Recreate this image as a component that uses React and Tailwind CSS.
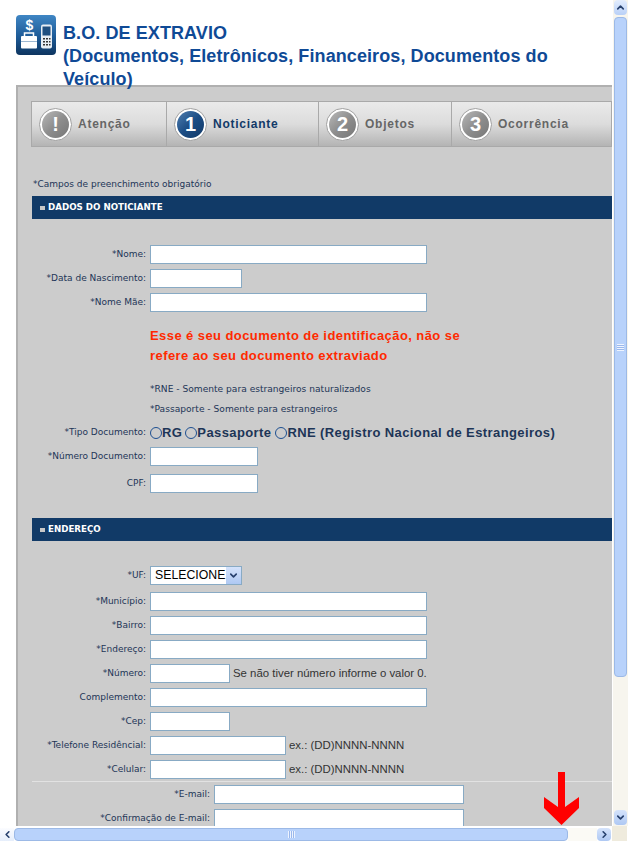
import React from "react";
import { ChevronLeft, ChevronRight, ChevronUp, ChevronDown } from "lucide-react";

const verdana = "font-['DejaVu_Sans',sans-serif]";
const arial = "font-['Liberation_Sans',Arial,sans-serif]";

const Logo = () => (
  <svg width="40" height="40" viewBox="0 0 40 40" className="shrink-0">
    <defs>
      <linearGradient id="logoBg" x1="0" y1="0" x2="0" y2="1">
        <stop offset="0" stopColor="#3f86c4" />
        <stop offset="0.55" stopColor="#1d5a96" />
        <stop offset="1" stopColor="#0e3560" />
      </linearGradient>
    </defs>
    <rect width="40" height="40" rx="4" fill="url(#logoBg)" />
    <text x="13.5" y="15" textAnchor="middle" fontSize="14" fontWeight="700" fontFamily="Liberation Sans" fill="#fff">$</text>
    <path d="M8.5 22v-4h9v4" fill="none" stroke="#fff" strokeWidth="1.5" />
    <rect x="5" y="21" width="16" height="12.5" rx="1" fill="#fff" />
    <rect x="5" y="26" width="16" height="1" fill="#9db8d2" />
    <rect x="25" y="9.5" width="11" height="24" rx="2" fill="#e8eef4" />
    <rect x="26.5" y="11.5" width="8" height="9" fill="#1f4f80" />
    <path d="M27 23h2v1.5h-2zM30 23h2v1.5h-2zM33 23h1.5v1.5H33zM27 26h2v1.5h-2zM30 26h2v1.5h-2zM33 26h1.5v1.5H33zM27 29h2v1.5h-2zM30 29h2v1.5h-2zM33 29h1.5v1.5H33z" fill="#333" />
  </svg>
);

const Tab = ({ width, glyph, label, active }) => (
  <div className={`${width} h-[46px] shrink-0 flex items-center pl-[7px] border-y border-r border-[#a9a9a9] bg-gradient-to-b from-[#eaeaea] via-[#dcdcdc] to-[#b4b4b4]`}>
    <div className="w-[33px] h-[33px] shrink-0 rounded-full bg-white border border-[#a0a0a0] flex items-center justify-center">
      <div
        className={`w-[27px] h-[27px] rounded-full flex items-center justify-center text-[20px] font-bold text-white ${arial} ${
          active
            ? "bg-gradient-to-br from-[#4f7fb0] via-[#1c4d85] to-[#123a68]"
            : "bg-gradient-to-br from-[#b9b9b9] via-[#8e8e8e] to-[#777777]"
        }`}
      >
        {glyph}
      </div>
    </div>
    <span className={`ml-[6px] text-[12px] font-bold tracking-[0.75px] ${arial} ${active ? "text-[#123a68]" : "text-[#666666]"}`}>
      {label}
    </span>
  </div>
);

const SectionBar = ({ title, className }) => (
  <div className={`h-[23px] bg-[#113a67] flex items-center pl-[8px] ${className}`}>
    <span className="w-[5px] h-[4px] bg-[#c8c8c8] mr-[3px]" />
    <span className={`text-[8.7px] font-bold text-white ${verdana}`}>{title}</span>
  </div>
);

const Row = ({ label, input, note, className = "", labelWidth = "w-[115px]" }) => (
  <div className={`flex items-center h-[19px] ${className}`}>
    <div className={`${labelWidth} shrink-0 text-right text-[9px] text-[#1d3557] ${verdana}`}>{label}</div>
    <input className={`${input} h-[19px] ml-[4px] bg-white border border-[#88aac4] shrink-0`} />
    {note}
  </div>
);

const Note = ({ children }) => (
  <span className={`ml-[3px] text-[11.4px] text-[#333333] whitespace-nowrap ${arial}`}>{children}</span>
);

const Radio = () => (
  <span className="w-[12px] h-[12px] rounded-full bg-[#cccccc] border border-[#1d4f91] shrink-0" />
);

const VScroll = () => (
  <div className="w-[15px] h-[826px] ml-px flex flex-col bg-[#f7f5ee]">
    <div className="h-[15px] mx-px bg-gradient-to-b from-[#e3edfd] to-[#b9d0f7] rounded-sm flex items-center justify-center text-[#27406d]">
      <ChevronUp size={11} strokeWidth={3.5} />
    </div>
    <div className="h-[660px] mt-[2px] mx-px bg-[#b8d2fb] border border-[#9cb9e6] rounded-sm flex items-center justify-center">
      <div className="w-[7px] h-[7px] bg-[repeating-linear-gradient(to_bottom,#eef4ff_0,#eef4ff_1px,#9ab8ec_1px,#9ab8ec_2px)]" />
    </div>
    <div className="flex-1" />
    <div className="h-[15px] mx-px mb-px bg-gradient-to-b from-[#d5e3fb] to-[#aec8f3] rounded-sm flex items-center justify-center text-[#27406d]">
      <ChevronDown size={11} strokeWidth={3.5} />
    </div>
  </div>
);

const HScroll = () => (
  <div className="h-[15px] flex items-end">
    <div className="w-[14px] h-[13px] bg-gradient-to-b from-[#fbfcff] to-[#e6eefb] flex items-center justify-center text-[#27406d]">
      <ChevronLeft size={11} strokeWidth={3.5} />
    </div>
    <div className="w-[554px] h-[13px] bg-[#b8d2fb] border border-[#9cb9e6] rounded-sm flex items-center justify-center">
      <div className="w-[7px] h-[7px] bg-[repeating-linear-gradient(to_right,#eef4ff_0,#eef4ff_1px,#9ab8ec_1px,#9ab8ec_2px)]" />
    </div>
    <div className="w-[29px] h-[13px] bg-[#fbfaf5]" />
    <div className="w-[14px] h-[13px] bg-gradient-to-b from-[#d5e3fb] to-[#aec8f3] rounded-sm flex items-center justify-center text-[#27406d]">
      <ChevronRight size={11} strokeWidth={3.5} />
    </div>
    <div className="w-px" />
    <div className="w-[15px] h-[15px] bg-[#efebdd]" />
  </div>
);

export default function App() {
  return (
    <div className="relative w-[634px] h-[850px] overflow-hidden bg-white">
      <div className="flex h-[826px]">
        <div className="w-[612px] h-[826px] overflow-hidden">
          {/* cabecalho */}
          <header className="flex pl-[16px] pt-[15px] h-[85px]">
            <Logo />
            <h1 className={`ml-[7px] mt-[7px] w-[500px] text-[18px] leading-[23px] tracking-[0.09px] font-bold text-[#0f4a96] ${arial}`}>
              B.O. DE EXTRAVIO
              <br />
              (Documentos, Eletrônicos, Financeiros, Documentos do Veículo)
            </h1>
          </header>

          <main className="ml-[16px] h-[741px] bg-[#cccccc] border-l-[2px] border-t-[2px] border-[#b0b0b0] pl-[13px]">
            <div className="flex mt-[14px] border-l border-[#a9a9a9]">
              <Tab width="w-[135px]" glyph="!" label="Atenção" />
              <Tab width="w-[152px]" glyph="1" label="Noticiante" active />
              <Tab width="w-[133px]" glyph="2" label="Objetos" />
              <Tab width="w-[160px]" glyph="3" label="Ocorrência" />
            </div>

            <p className={`ml-[2px] mt-[31px] text-[9px] leading-[12px] text-[#1d3557] ${verdana}`}>*Campos de preenchimento obrigatório</p>
            <SectionBar title="DADOS DO NOTICIANTE" className="mt-[6px] ml-px" />

            <Row label="*Nome:" input="w-[277px]" className="mt-[26px]" />
            <Row label="*Data de Nascimento:" input="w-[92px]" className="mt-[5px]" />
            <Row label="*Nome Mãe:" input="w-[277px]" className="mt-[5px]" />

            <div className={`ml-[119px] mt-[14px] w-[340px] text-[13px] leading-[20px] font-bold text-[#ff2a00] tracking-[0.42px] ${arial}`}>
              Esse é seu documento de identificação, não se
              <br />
              refere ao seu documento extraviado
            </div>

            <p className={`ml-[119px] mt-[17px] text-[9.1px] leading-[12px] text-[#1d3557] ${verdana}`}>*RNE - Somente para estrangeiros naturalizados</p>
            <p className={`ml-[119px] mt-[8px] text-[9.1px] leading-[12px] text-[#1d3557] ${verdana}`}>*Passaporte - Somente para estrangeiros</p>

            <div className="flex items-center h-[16px] mt-[10px]">
              <div className={`w-[115px] shrink-0 text-right text-[9px] text-[#1d3557] ${verdana}`}>*Tipo Documento:</div>
              <div className={`ml-[4px] flex items-center whitespace-nowrap text-[13px] font-bold text-[#1d3557] tracking-[0.4px] ${arial}`}>
                <Radio />
                <span>RG</span>
                <span className="w-[3px]" />
                <Radio />
                <span>Passaporte</span>
                <span className="w-[4px]" />
                <Radio />
                <span>RNE (Registro Nacional de Estrangeiros)</span>
              </div>
            </div>

            <Row label="*Número Documento:" input="w-[108px]" className="mt-[6px]" />
            <Row label="CPF:" input="w-[108px]" className="mt-[8px]" />

            <SectionBar title="ENDEREÇO" className="mt-[25px] ml-px" />

            <div className="flex items-center h-[19px] mt-[25px]">
              <div className={`w-[115px] shrink-0 text-right text-[9px] text-[#1d3557] ${verdana}`}>*UF:</div>
              <div className="ml-[4px] w-[92px] h-[19px] bg-white border border-[#88aac4] flex items-center justify-between shrink-0">
                <span className={`pl-[4px] text-[12.3px] text-black ${arial}`}>SELECIONE</span>
                <span className="w-[15px] h-[17px] bg-gradient-to-b from-[#d5e3fb] to-[#aec8f3] flex items-center justify-center text-[#27406d]">
                  <ChevronDown size={11} strokeWidth={3.5} />
                </span>
              </div>
            </div>

            <Row label="*Município:" input="w-[277px]" className="mt-[7px]" />
            <Row label="*Bairro:" input="w-[277px]" className="mt-[5px]" />
            <Row label="*Endereço:" input="w-[277px]" className="mt-[5px]" />
            <Row label="*Número:" input="w-[80px]" className="mt-[5px]" note={<Note>Se não tiver número informe o valor 0.</Note>} />
            <Row label="Complemento:" input="w-[277px]" className="mt-[5px]" />
            <Row label="*Cep:" input="w-[80px]" className="mt-[5px]" />
            <Row label="*Telefone Residêncial:" input="w-[136px]" className="mt-[5px]" note={<Note>ex.: (DD)NNNN-NNNN</Note>} />
            <Row label="*Celular:" input="w-[136px]" className="mt-[5px]" note={<Note>ex.: (DD)NNNN-NNNN</Note>} />

            <div className="mt-[2px] h-px bg-[#e2e2e2] ml-px" />
            <Row label="*E-mail:" input="w-[250px]" labelWidth="w-[179px]" className="mt-[3px]" />
            <Row label="*Confirmação de E-mail:" input="w-[250px]" labelWidth="w-[179px]" className="mt-[5px]" />
          </main>
        </div>
        <VScroll />
      </div>
      <HScroll />

      {/* seta vermelha por cima da barra */}
      <svg width="36" height="54" viewBox="0 0 36 54" className="absolute left-[544px] top-[772px]">
        <path d="M14 0h7v35L35 25v11L17.5 53 0 36V25l14 10z" fill="#ff0000" />
      </svg>
    </div>
  );
}
